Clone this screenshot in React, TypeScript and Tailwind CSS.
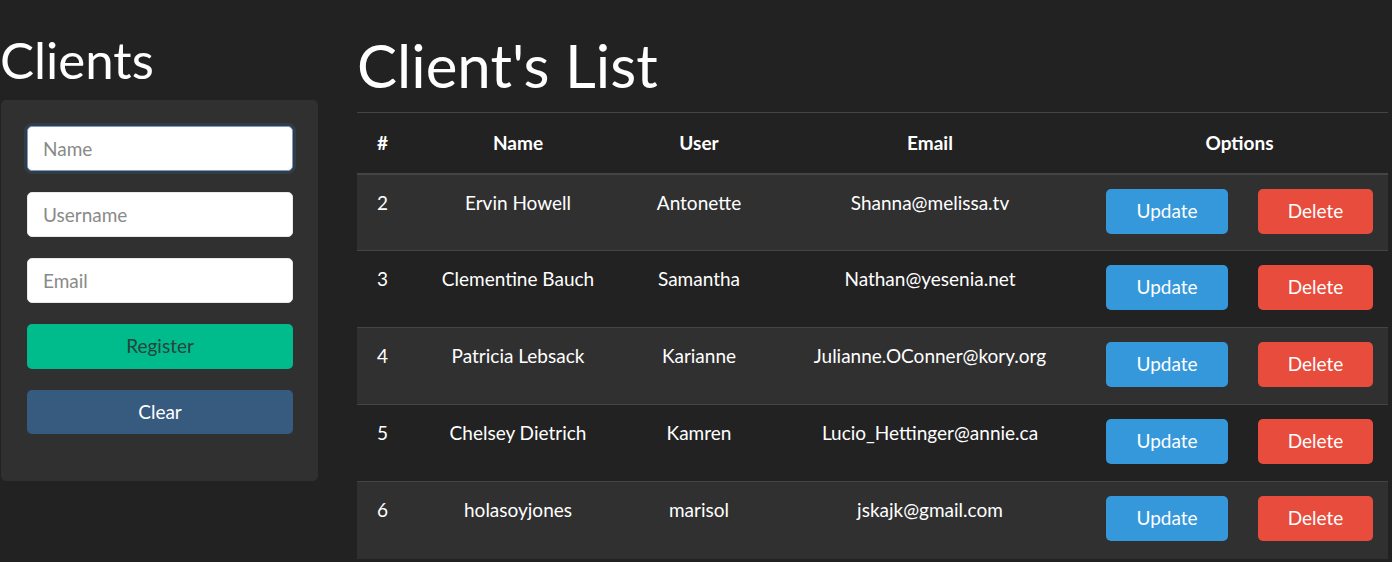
import React from 'react'

type Client = {
  id: number
  name: string
  username: string
  email: string
}

const clients: Client[] = [
  { id: 2, name: 'Ervin Howell', username: 'Antonette', email: 'Shanna@melissa.tv' },
  { id: 3, name: 'Clementine Bauch', username: 'Samantha', email: 'Nathan@yesenia.net' },
  { id: 4, name: 'Patricia Lebsack', username: 'Karianne', email: 'Julianne.OConner@kory.org' },
  { id: 5, name: 'Chelsey Dietrich', username: 'Kamren', email: 'Lucio_Hettinger@annie.ca' },
  { id: 6, name: 'holasoyjones', username: 'marisol', email: 'jskajk@gmail.com' },
]

const inputCls =
  'block w-[266px] h-[45px] rounded-[5px] bg-white px-[15px] text-[19px] text-[#222] placeholder:text-[#8a8a8a] outline-none'

export default function App() {
  return (
    <div className="min-h-screen bg-[#222] text-white font-['Lato','Liberation_Sans',sans-serif] flex">
      <aside className="w-[319px] shrink-0">
        <h1 className="mt-[29px] text-[51px] leading-[1.2] font-normal">Clients</h1>
        <form
          className="mt-[10px] ml-px w-[317px] rounded-[5px] bg-[#303030] pl-[26px] pt-[26px] pb-[47px] flex flex-col gap-[21px]"
          onSubmit={(e) => e.preventDefault()}
        >
          <input
            className={inputCls + ' border border-[#7a9cc2] shadow-[0_0_0_3px_rgba(55,90,127,0.3)]'}
            placeholder="Name"
          />
          <input className={inputCls + ' border border-[#e8e8e8]'} placeholder="Username" />
          <input className={inputCls + ' border border-[#e8e8e8]'} placeholder="Email" />
          <button type="submit" className="w-[266px] h-[45px] rounded-[5px] bg-[#00bc8c] text-[19px] text-[#27443c]">
            Register
          </button>
          <button type="button" className="w-[266px] h-[44px] rounded-[5px] bg-[#375a7f] text-[19px] text-white">
            Clear
          </button>
        </form>
      </aside>

      <main className="ml-[38px] w-[1031px] shrink-0">
        <h1 className="mt-[29px] text-[60px] leading-[1.2] font-normal">Client's List</h1>
        <table className="mt-[11px] w-full table-fixed border-collapse text-[19px]">
          <colgroup>
            <col className="w-[50px]" />
            <col className="w-[222px]" />
            <col className="w-[140px]" />
            <col className="w-[322px]" />
            <col className="w-[297px]" />
          </colgroup>
          <thead>
            <tr className="border-t border-[#444] border-b-2 border-b-[#444]">
              <th className="h-[61px] pl-[20px] text-left font-bold">#</th>
              <th className="font-bold">Name</th>
              <th className="font-bold">User</th>
              <th className="font-bold">Email</th>
              <th className="font-bold">Options</th>
            </tr>
          </thead>
          <tbody>
            {clients.map((c, i) => (
              <tr
                key={c.id}
                className={(i % 2 === 0 ? 'bg-[#303030]' : '') + (i > 0 ? ' border-t border-[#444]' : '')}
              >
                <td className="h-[77px] pl-[20px] pt-[14px] align-top">{c.id}</td>
                <td className="pt-[14px] align-top text-center">{c.name}</td>
                <td className="pt-[14px] align-top text-center">{c.username}</td>
                <td className="pt-[14px] align-top text-center">{c.email}</td>
                <td className="px-[15px] pt-[14px] align-top">
                  <div className="flex justify-between">
                    <button className="w-[122px] h-[45px] rounded-[5px] bg-[#3498db] text-[19px] text-white">
                      Update
                    </button>
                    <button className="w-[115px] h-[45px] rounded-[5px] bg-[#e74c3c] text-[19px] text-white">
                      Delete
                    </button>
                  </div>
                </td>
              </tr>
            ))}
          </tbody>
        </table>
      </main>
    </div>
  )
}
